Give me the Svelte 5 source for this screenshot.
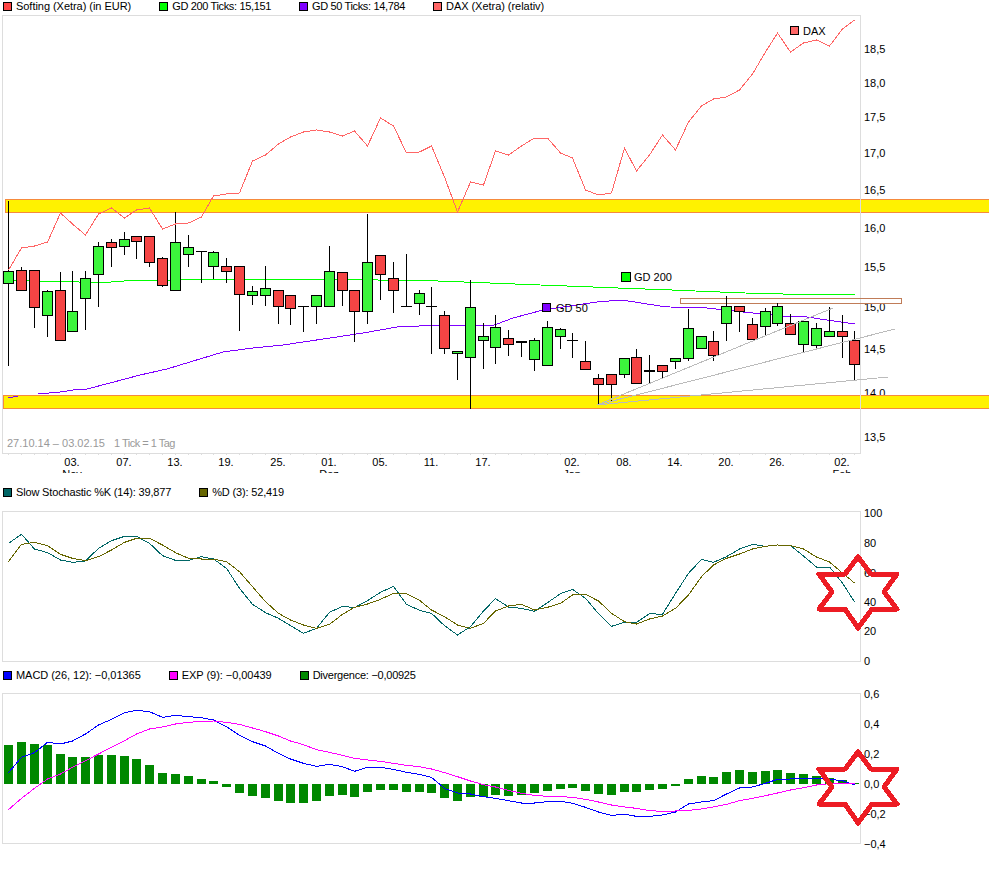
<script>
	// x position of a tick, all chart data is in page pixels
	const tickX = (i) => Math.round(8.28 + i * 12.82);
	const points = (ys) => ys.map((y, i) => `${tickX(i) + 0.5},${y}`).join(' ');

	// [wick top, wick bottom, body top, body bottom, up]
	const candles = [
		[201,366,271,283,1],[267,290,270,290,0],[270,328,270,307,0],[290,337,291,315,1],[272,340,290,340,0],
		[271,331,311,331,1],[271,330,278,298,1],[242,307,246,274,1],[239,267,242,247,0],[232,255,239,246,1],
		[236,259,236,241,0],[236,267,236,262,0],[257,287,258,285,0],[212,290,242,290,1],[235,267,247,254,1],
		[251,283,251,251,1],[251,279,252,266,1],[258,283,266,271,0],[266,331,266,294,0],[286,305,291,295,1],
		[266,306,288,295,1],[290,324,290,306,0],[295,325,295,308,0],[306,332,306,306,1],[295,324,295,306,1],
		[246,306,271,306,1],[272,306,272,290,0],[290,342,290,311,0],[214,324,262,311,1],[255,300,255,274,0],
		[262,313,278,290,0],[254,306,306,306,1],[290,315,293,303,1],[287,354,306,306,1],[311,354,315,348,0],
		[351,380,351,353,1],[280,409,307,357,1],[323,369,336,340,1],[315,364,327,347,1],[330,356,338,344,0],
		[341,357,341,342,1],[338,371,340,359,1],[321,365,327,365,1],[328,349,329,336,1],[333,358,340,340,1],
		[341,369,361,369,0],[374,405,378,384,0],[374,401,374,384,0],[358,378,358,374,1],[349,383,357,383,0],
		[355,383,370,371,1],[365,379,365,371,0],[358,369,358,361,1],[309,361,328,358,1],[336,348,336,348,1],
		[331,361,341,355,0],[296,341,306,323,1],[306,332,306,311,0],[318,340,324,339,0],[308,335,311,326,1],
		[303,326,306,323,1],[314,334,323,334,0],[321,353,321,344,1],[323,349,328,345,1],[307,336,331,336,1],
		[315,358,331,336,0],[331,380,340,364,0]
	];

	const dax = [270,248,246,242,213,224,235,214,208,218,210,208,229,224,223,217,196,194,193,161,155,144,137,132,130,132,136,131,146,118,126,153,152,146,177,212,182,185,151,155,146,138,138,153,158,190,195,193,148,171,155,135,150,122,106,99,97,90,74,52,33,52,43,40,46,29,20];

	const gd200 = '13,280.5 53,281.5 105,282.5 130,280.5 167,280.5 182,279.5 270,279.5 330,279.5 425,280.5 477,282.5 527,284.5 580,286.5 630,288.5 660,289.5 707,291.5 758,293.5 808,294.5 855,294.5';
	const gd50 = '38,394 60,392 80,389 87,389 110,383 140,375 167,369 190,362 223,352 253,348 283,345 330,338 363,333 397,327 430,325.5 493,325.5 513,318 543,310 563,307 597,302 622,300 660,306 670,307 707,308 743,312 783,316 807,317 827,320 855,324';

	const fan = [[888, 377], [895, 329], [833, 308]];

	const priceAxis = [['18,5',49],['18,0',83],['17,5',117],['17,0',153],['16,5',190],['16,0',228],['15,5',267],['15,0',307],['14,5',349],['14,0',393],['13,5',437]];
	const dateAxis = [[5,'03.','Nov'],[9,'07.'],[13,'13.'],[17,'19.'],[21,'25.'],[25,'01.','Dez'],[29,'05.'],[33,'11.'],[37,'17.'],[44,'02.','Jan'],[48,'08.'],[52,'14.'],[56,'20.'],[60,'26.'],[65,'02.','Feb']];

	// stochastic, read off the chart
	const stochK = [115,88,132,143,165,172,168,130,107,94,94,115,152,166,166,155,162,190,250,298,323,340,362,385,370,322,304,308,287,262,244,298,316,325,362,390,365,318,281,306,310,319,293,266,253,280,326,364,352,352,326,328,265,205,163,172,155,132,118,124,120,122,153,186,186,234,291].map((z) => 505 + z / 3);
	const stochD = [170,118,112,122,148,160,167,155,135,112,100,100,120,143,160,162,162,170,200,245,290,325,345,360,370,358,328,307,297,283,265,266,286,315,335,360,370,355,318,303,298,315,307,295,270,268,288,325,350,357,342,333,310,270,215,180,160,147,132,124,120,122,132,156,171,204,234].map((z) => 505 + z / 3);
	const stochAxis = [['100',513],['80',543],['60',573],['40',602],['20',631],['0',661]];

	// macd
	const macd = [
		...[338,292,278,247,252,243,222,195,178,158,151,155,172,166,170,173,180,200,226,245,258,280,297,310,319,313,320,334,322,322,328].map((z) => 660 + z / 3),
		...[277,283,292,325,339,342,350,355,362,369,369,365,364,370,382,396,406,403,409,409,405,396,372,366,362,342,324,321,310,298,297,295,295,298,302,315].map((z) => 680 + z / 3)
	];
	const signal = [
		...[449,415,385,357,342,322,302,282,262,242,222,207,201,192,187,184,183,187,193,204,215,228,243,254,269,277,286,295,300,304,310].map((z) => 660 + z / 3),
		...[256,260,267,278,290,303,314,321,331,340,346,349,350,352,358,366,375,381,385,392,394,393,391,387,381,373,362,355,347,339,330,323,315,311,310,312].map((z) => 680 + z / 3)
	];
	const bars = [
		...[255,246,252,255,282,291,291,285,285,288,297,315,339,342,348,357,363,381,399,408,414,423,429,429,423,408,405,411,396,390,390].map((z) => 660 + z / 3),
		...[335,335,338,353,362,350,350,345,348,345,340,332,326,324,332,342,344,335,335,330,327,318,297,288,291,276,270,276,273,270,279,282,288,294,300,309].map((z) => 680 + z / 3)
	];
	const zero = 784;
	const macdAxis = [['0,6',694],['0,4',724],['0,2',754],['0,0',784],['−0,2',814],['−0,4',844]];

	const star = (dy) => [[858,557],[871,574],[897,574],[884,592],[897,609],[872,609],[858,628],[845,609],[819,609],[832,592],[819,574],[845,574]].map(([x, y]) => `${x},${y + dy}`).join(' ');
</script>

<main>
	<div class="legend first">
		<span class="item"><i style="background:#f44"></i>Softing (Xetra) (in EUR)</span>
		<span class="item narrow"><i style="background:#0f0"></i>GD 200 Ticks: 15,151</span>
		<span class="item narrow"><i style="background:#7f00ff"></i>GD 50 Ticks: 14,784</span>
		<span class="item"><i style="background:#f66"></i>DAX (Xetra) (relativ)</span>
	</div>

	<svg class="price" width="989" height="458" viewBox="0 15 989 458">
		{#each priceAxis as [label, y]}
			<text x="864" y={y + 4}>{label}</text>
		{/each}

		<polyline class="gd50" points={gd50} />
		<rect class="band" x="5.5" y="199.5" width="990" height="13" />
		<rect class="band" x="3.5" y="395.5" width="990" height="13" />
		<polyline class="gd50" points="8,397.5 18,396.5" />

		<path class="frame" d="M2.5 15.5H860.5V453.5H2.5Z" />
		{#each candles as _, i}
			<path class="frame" d="M{tickX(i) + 0.5} 453V455" />
		{/each}

		<text class="note" x="7" y="447">27.10.14 – 03.02.15</text>
		<text class="note tick" x="114" y="447">1 Tick = 1 Tag</text>

		{#each dateAxis as [i, day, month]}
			<text class="date" x={tickX(i)} y="466">{day}</text>
			{#if month}
				<text class="date" x={tickX(i)} y="478">{month}</text>
			{/if}
		{/each}

		<polyline class="gd200" points={gd200} />
		<rect class="box" x="680.5" y="298.5" width="221" height="5" />

		{#each candles as [hi, lo, top, bottom, up], i}
			<path class="wick" d="M{tickX(i) + 0.5} {hi}V{lo}" />
			{#if top === bottom}
				<path class="wick" d="M{tickX(i) - 5} {top + 0.5}H{tickX(i) + 6}" />
			{:else}
				<rect class={up ? 'up' : 'down'} x={tickX(i) - 4.5} y={top + 0.5} width="10" height={bottom - top} />
			{/if}
		{/each}

		<polyline class="dax" points={points(dax)} />
		{#each fan as [x, y]}
			<line class="fan" x1="597" y1="405" x2={x} y2={y} />
		{/each}

		<rect class="mark" style="fill:#0f0" x="621.5" y="272.5" width="9" height="9" />
		<text x="634" y="281">GD 200</text>
		<rect class="mark" style="fill:#7f00ff" x="542.5" y="303.5" width="8" height="8" />
		<text x="556" y="312">GD 50</text>
		<rect class="mark" style="fill:#f66" x="790.5" y="26.5" width="8" height="8" />
		<text x="803" y="35">DAX</text>
	</svg>

	<div class="legend second">
		<span class="item slight"><i style="background:#066"></i>Slow Stochastic %K (14): 39,877</span>
		<span class="item slight"><i style="background:#660"></i>%D (3): 52,419</span>
	</div>

	<svg width="989" height="151" viewBox="0 511 989 151">
		<path class="frame" d="M2.5 511.5H860.5V661.5H2.5Z" />
		{#each stochAxis as [label, y]}
			<text x="864" y={y + 4}>{label}</text>
		{/each}
		<polyline class="stoch-k" points={points(stochK)} />
		<polyline class="stoch-d" points={points(stochD)} />
		<polygon class="star" points={star(0)} />
	</svg>

	<div class="legend third">
		<span class="item"><i style="background:#00f"></i>MACD (26, 12): −0,01365</span>
		<span class="item"><i style="background:#f0f"></i>EXP (9): −0,00439</span>
		<span class="item mid"><i style="background:#080"></i>Divergence: −0,00925</span>
	</div>

	<svg width="989" height="160" viewBox="0 693 989 160">
		<path class="frame" d="M2.5 693.5H860.5V843.5H2.5Z" />
		{#each macdAxis as [label, y]}
			<text x="864" y={y + 4}>{label}</text>
		{/each}
		{#each bars as y, i}
			<rect class="bar" x={tickX(i) - 4} y={Math.min(y, zero)} width="9" height={Math.max(Math.abs(y - zero), 1)} />
		{/each}
		<polyline class="macd" points={points(macd)} />
		<polyline class="signal" points={points(signal)} />
		<polygon class="star" points={star(195)} />
	</svg>
</main>

<style>
	:global(body) {
		background: #fff;
		color: #000;
		font-family: "Liberation Sans", Arial, sans-serif;
		font-size: 11px;
	}

	main {
		width: 989px;
		height: 880px;
		overflow: hidden;
		display: flex;
		flex-direction: column;
	}

	svg {
		display: block;
		flex: none;
		overflow: visible;
		font-family: "Liberation Sans", Arial, sans-serif;
		font-size: 11px;
	}
	/* month names are cut by the lower edge */
	.price { overflow: hidden; }

	.legend {
		display: flex;
		align-items: flex-start;
		gap: 28px;
		padding-left: 3px;
		flex: none;
		box-sizing: border-box;
		line-height: 13px;
		letter-spacing: -0.04px;
	}
	.first { height: 15px; }
	.second { height: 38px; padding-top: 13px; }
	.third { height: 31px; padding-top: 7px; }

	.item {
		display: flex;
		align-items: center;
		gap: 4px;
		white-space: nowrap;
	}
	.narrow { letter-spacing: -0.35px; }
	.mid { letter-spacing: -0.25px; }
	.slight { letter-spacing: -0.16px; }
	.item i {
		display: block;
		width: 9px;
		height: 9px;
		box-sizing: border-box;
		border: 1px solid #000;
	}

	polyline, line, .frame, .wick, .band, .box, .star, rect {
		shape-rendering: crispEdges;
	}
	polyline { fill: none; }

	.frame { fill: none; stroke: #ddd; }
	.band { fill: #fff200; stroke: #f68a3c; }
	.box { fill: none; stroke: #c07c58; }
	.wick { fill: none; stroke: #000; }
	.up { fill: #3cf53c; stroke: #000; }
	.down { fill: #f54444; stroke: #000; }
	.mark { stroke: #000; }
	.note { fill: #999; }
	.tick { letter-spacing: -0.5px; }
	.date { text-anchor: middle; }

	.dax { stroke: #f66; }
	.gd200 { stroke: #0f0; }
	.gd50 { stroke: #7f00ff; }
	.fan { stroke: #bbb; }
	.stoch-k { stroke: #066; }
	.stoch-d { stroke: #660; }
	.macd { stroke: #00f; }
	.signal { stroke: #f0f; }
	.bar { fill: #080; }
	.star { fill: none; stroke: #ed1c24; stroke-width: 5; stroke-linejoin: round; }
</style>
